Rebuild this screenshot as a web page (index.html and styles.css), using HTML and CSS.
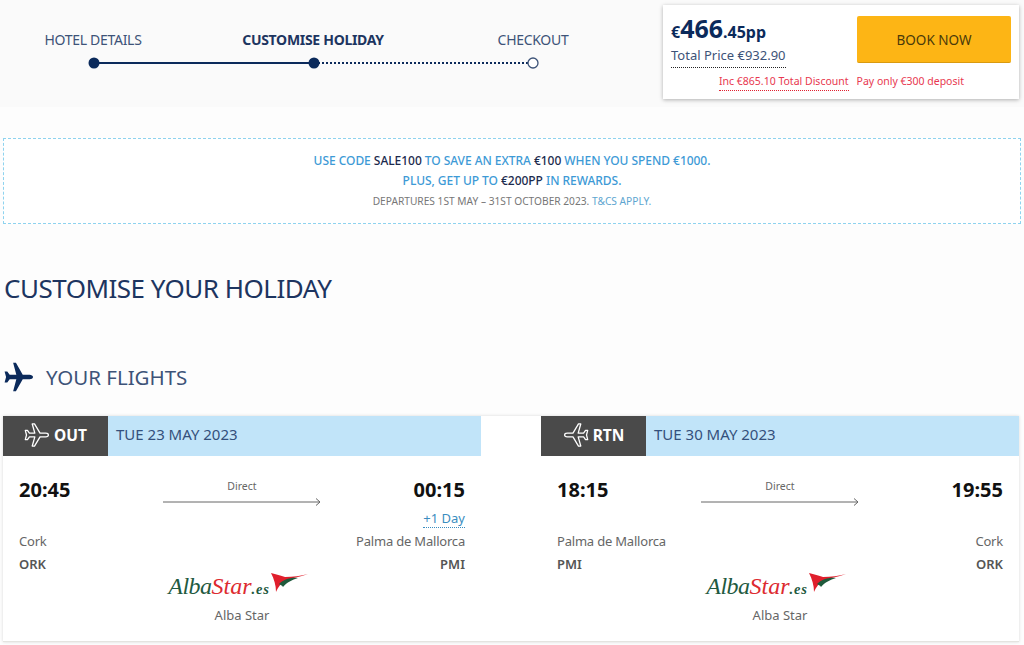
FILE: index.html
```html
<!DOCTYPE html>
<html lang="en">
<head>
<meta charset="utf-8">
<title>Customise your holiday</title>
<link rel="stylesheet" href="styles.css">
</head>
<body>
<header class="topbar">
  <div class="steps">
    <div class="step"><span class="step-label">HOTEL DETAILS</span></div>
    <div class="step"><span class="step-label step-current">CUSTOMISE HOLIDAY</span></div>
    <div class="step"><span class="step-label">CHECKOUT</span></div>
    <svg class="track" width="452" height="14" viewBox="0 0 452 14">
      <line x1="6" y1="7" x2="226" y2="7" class="track-done"/>
      <line x1="226" y1="7" x2="445" y2="7" class="track-todo"/>
      <circle cx="6" cy="7" r="5.5" class="dot-done"/>
      <circle cx="226" cy="7" r="5.5" class="dot-done"/>
      <circle cx="445" cy="7" r="5" class="dot-todo"/>
    </svg>
  </div>
  <aside class="price-card">
    <div class="price-main">
      <div class="price-col">
        <div class="price"><span class="cur">€</span><span class="big">466</span><span class="small">.45pp</span></div>
        <div class="total"><span class="total-text">Total Price €932.90</span></div>
      </div>
      <button class="book">BOOK NOW</button>
    </div>
    <div class="price-notes">
      <span class="note note-line">Inc €865.10 Total Discount</span>
      <span class="note">Pay only €300 deposit</span>
    </div>
  </aside>
</header>

<section class="promo">
  <p class="promo-line">USE CODE <b>SALE100</b> TO SAVE AN EXTRA <b>€100</b> WHEN YOU SPEND €1000.</p>
  <p class="promo-line">PLUS, GET UP TO <b>€200PP</b> IN REWARDS.</p>
  <p class="promo-small">DEPARTURES 1ST MAY – 31ST OCTOBER 2023. <span class="tcs">T&amp;CS APPLY.</span></p>
</section>

<h1 class="title">CUSTOMISE YOUR HOLIDAY</h1>

<h2 class="flights-title">
  <svg class="plane-big" width="32" height="32" viewBox="0 0 24 24"><path d="M22.500 12c0-1-1.300-1.700-2.500-1.700h-5.200L9.700 1.300H7.600l2.400 9H5L3.200 7.800H1.200L2.300 12l-1.100 4.200h2L5 13.700h5l-2.400 9h2.100l5.100-9H20c1.200 0 2.500-.7 2.500-1.700z"/></svg>
  <span>YOUR FLIGHTS</span>
</h2>

<section class="flights">
  <article class="leg">
    <div class="leg-head">
      <div class="tag">
        <svg class="plane-line" width="26" height="26" viewBox="0 0 24 24"><path d="M22.500 12c0-1-1.300-1.700-2.500-1.700h-5.200L9.700 1.800H7.600l2.400 8.500H5L3.200 7.800H1.200L2.300 12l-1.100 4.200h2L5 13.700h5l-2.400 8.500h2.100l5.100-8.500H20c1.200 0 2.500-.7 2.500-1.700z"/></svg>
        <span>OUT</span>
      </div>
      <div class="date">TUE 23 MAY 2023</div>
    </div>
    <div class="leg-body">
      <div class="times">
        <span class="time">20:45</span>
        <div class="route"><span class="direct">Direct</span>
          <svg class="arrow" width="158" height="8" viewBox="0 0 158 8"><path d="M0 4h157M153 .5 157 4l-4 3.500"/></svg>
        </div>
        <span class="time time-end">00:15</span>
      </div>
      <div class="extra"><span class="plus-day">+1 Day</span></div>
      <div class="places"><span>Cork</span><span>Palma de Mallorca</span></div>
      <div class="codes"><span>ORK</span><span>PMI</span></div>
      <div class="airline">
        <div class="logo"><span class="logo-a">Alba</span><span class="logo-s">Star</span><span class="logo-e">.es</span>
          <svg class="wing" width="38" height="20" viewBox="0 0 38 20"><path class="w-red" d="M0 0c5 1 10 3 14 4 8 0 16-1 23-3-8 3-17 4-23 7-4 2-7 6-9 11C5 12 3 6 0 0z"/><path class="w-green" d="M8 11c4-4 11-7 19-6-6 2-11 4-15 9-1-2-3-2-4-3z"/></svg>
        </div>
        <span class="airline-name">Alba Star</span>
      </div>
    </div>
  </article>

  <article class="leg">
    <div class="leg-head">
      <div class="tag">
        <svg class="plane-line flip" width="26" height="26" viewBox="0 0 24 24"><path d="M22.500 12c0-1-1.300-1.700-2.500-1.700h-5.200L9.700 1.800H7.600l2.400 8.500H5L3.200 7.800H1.200L2.300 12l-1.100 4.200h2L5 13.700h5l-2.400 8.500h2.100l5.100-8.500H20c1.200 0 2.500-.7 2.500-1.700z"/></svg>
        <span>RTN</span>
      </div>
      <div class="date">TUE 30 MAY 2023</div>
    </div>
    <div class="leg-body">
      <div class="times">
        <span class="time">18:15</span>
        <div class="route"><span class="direct">Direct</span>
          <svg class="arrow" width="158" height="8" viewBox="0 0 158 8"><path d="M0 4h157M153 .5 157 4l-4 3.500"/></svg>
        </div>
        <span class="time time-end">19:55</span>
      </div>
      <div class="extra"></div>
      <div class="places"><span>Palma de Mallorca</span><span>Cork</span></div>
      <div class="codes"><span>PMI</span><span>ORK</span></div>
      <div class="airline">
        <div class="logo"><span class="logo-a">Alba</span><span class="logo-s">Star</span><span class="logo-e">.es</span>
          <svg class="wing" width="38" height="20" viewBox="0 0 38 20"><path class="w-red" d="M0 0c5 1 10 3 14 4 8 0 16-1 23-3-8 3-17 4-23 7-4 2-7 6-9 11C5 12 3 6 0 0z"/><path class="w-green" d="M8 11c4-4 11-7 19-6-6 2-11 4-15 9-1-2-3-2-4-3z"/></svg>
        </div>
        <span class="airline-name">Alba Star</span>
      </div>
    </div>
  </article>
</section>
</body>
</html>
```

FILE: styles.css
```css
* { box-sizing: border-box; }
html, body { margin: 0; padding: 0; }
body {
  background: #fdfdfd;
  font-family: "Noto Sans", "Open Sans", sans-serif;
  color: #0b2a5b;
  height: 645px;
  overflow: hidden;
}
.topbar {
  display: flex;
  justify-content: space-between;
  height: 107px;
  padding: 5px 5px 0 0;
  background: #fafafa;
}
.steps {
  position: relative;
  display: grid;
  grid-template-columns: 220px 220px 220px;
  margin-left: -17px;
  padding-top: 23px;
  width: 660px;
  align-self: flex-start;
  height: 80px;
}
.step { text-align: center; }
.step-label { font-size: 14px; line-height: 16px; color: #3d5378; letter-spacing: -0.3px; }
.step-current { font-weight: 700; color: #1d3560; }
.track { position: absolute; left: 105px; top: 51px; }
.track-done { stroke: #0b2a5b; stroke-width: 2; }
.track-todo { stroke: #0b2a5b; stroke-width: 2; stroke-dasharray: 2 2; }
.dot-done { fill: #0b2a5b; }
.dot-todo { fill: #fff; stroke: #3d5378; stroke-width: 1.300; }

.price-card {
  width: 356px;
  height: 94px;
  background: #fff;
  box-shadow: 0 1px 4px rgba(0,0,0,.3);
  padding: 11px 8px 0 8px;
}
.price-main { display: flex; justify-content: space-between; }
.price { color: #0b2a5b; font-weight: 700; line-height: 24px; height: 24px; white-space: nowrap; }
.cur { font-size: 16px; }
.big { font-size: 25px; }
.small { font-size: 16px; }
.total { margin-top: 5px; line-height: 18px; height: 22px; }
.total-text {
  display: inline-block;
  font-size: 13px;
  line-height: 18px;
  color: #3d5378;
  border-bottom: 1px dotted #222;
  padding-bottom: 3px;
}
.book {
  width: 154px;
  height: 47px;
  background: #fdb515;
  border: 0;
  border-bottom: 1px solid #d99a10;
  border-radius: 2px;
  font: 13.500px "Noto Sans", sans-serif;
  color: #4a3a0a;
  padding: 2px 0 0;
}
.price-notes { display: flex; justify-content: flex-end; gap: 8px; margin-top: 7px; padding-right: 47px; }
.note { font-size: 10.500px; line-height: 14px; color: #e8384f; white-space: nowrap; }
.note-line { border-bottom: 1px dotted #e0202f; padding-bottom: 2px; }

.promo {
  margin: 31px 3px 0 3px;
  height: 86px;
  background: #fff;
  border: 1px dashed #8ed3ef;
  text-align: center;
  padding-top: 12px;
}
.promo p { margin: 0; }
.promo-line { font-size: 12px; line-height: 20px; font-weight: 500; color: #3d9ad6; letter-spacing: -0.040px; }
.promo-line b { font-weight: 500; color: #1b2a4d; }
.promo-small { margin-top: 1px; font-size: 10.200px; line-height: 20px; color: #777; }
.tcs { color: #5da5d0; }

.title {
  margin: 46px 0 0 4px;
  font-size: 26px;
  line-height: 36px;
  font-weight: 400;
  letter-spacing: -0.5px;
  color: #1d3560;
}
.flights-title {
  display: flex;
  align-items: center;
  gap: 11px;
  margin: 53px 0 0 3px;
  height: 36px;
  font-size: 20.500px;
  font-weight: 400;
  color: #3d5378;
}
.plane-big { fill: #0b2a5b; }

.flights {
  display: grid;
  grid-template-columns: 478px 478px;
  column-gap: 60px;
  margin: 21px 5px 0 3px;
  background: #fff;
  border-bottom: 1px solid #e4e4e0;
  box-shadow: 0 0 3px rgba(0,0,0,.15);
  height: 226px;
}
.leg-head { display: flex; height: 40px; background: #c1e4f9; }
.tag {
  display: flex;
  align-items: center;
  justify-content: center;
  gap: 4px;
  width: 105px;
  padding-bottom: 2px;
  background: #4a4a4a;
  color: #fff;
  font-size: 15.500px;
  font-weight: 700;
}
.plane-line { fill: none; stroke: #fff; stroke-width: 1.200; stroke-linejoin: round; }
.flip { transform: scaleX(-1); }
.date { padding-left: 8px; font-size: 15px; line-height: 37px; color: #34507c; }

.leg-body { padding: 20px 16px 0; }
.times { display: grid; grid-template-columns: 1fr auto 1fr; height: 31px; }
.time { font-size: 20px; line-height: 28px; font-weight: 700; color: #111; }
.time-end { text-align: right; }
.route { display: flex; flex-direction: column; align-items: center; margin-top: 3px; }
.direct { font-size: 10.500px; line-height: 14px; color: #666; }
.arrow { margin-top: 5px; fill: none; stroke: #666; stroke-width: 1; }
.extra { display: flex; justify-content: flex-end; height: 21px; margin-top: 2px; }
.plus-day { font-size: 13px; line-height: 18px; height: 19px; color: #3b8dc0; border-bottom: 1px dotted #3b8dc0; }
.places, .codes { display: flex; justify-content: space-between; font-size: 13px; color: #666; line-height: 22px; }
.places { height: 23px; letter-spacing: -0.2px; }
.codes { font-weight: 600; color: #555; height: 22px; }
.airline { display: flex; flex-direction: column; align-items: center; width: 446px; margin-top: -2px; }
.logo { display: flex; align-items: baseline; height: 24px; line-height: 24px; margin-right: 7px; white-space: nowrap; }
.logo-a { font: italic 24px "Liberation Serif", serif; color: #1f5a41; letter-spacing: -0.500px; }
.logo-s { font: italic 24px "Liberation Serif", serif; color: #dd2b30; }
.logo-e { font: italic 700 14.500px "Liberation Serif", serif; color: #1f5a41; letter-spacing: .8px; }
.wing { align-self: flex-start; margin-left: 1px; margin-top: 0; }
.w-red { fill: #e01f2c; }
.w-green { fill: #1e5a3c; }
.airline-name { margin-top: 7px; font-size: 13px; line-height: 22px; color: #666; }
```
